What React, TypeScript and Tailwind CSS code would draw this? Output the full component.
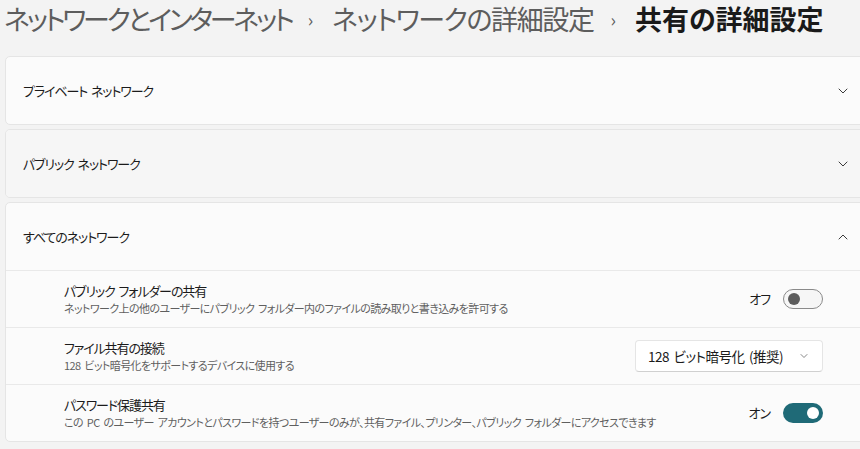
import { ChevronDown, ChevronUp } from "lucide-react";

const font = "font-['Noto_Sans_CJK_JP','Noto_Sans',sans-serif] [font-feature-settings:'palt'] [word-spacing:2px]";

function Toggle({ on }: { on: boolean }) {
  return on ? (
    <div className="flex h-[20px] w-[40px] items-center justify-end rounded-full bg-[#1f6a77] px-[4px]">
      <div className="h-[12px] w-[12px] rounded-full bg-white" />
    </div>
  ) : (
    <div className="flex h-[20px] w-[40px] items-center rounded-full border border-[#8a8a8a] bg-[#f6f6f6] px-[4px]">
      <div className="h-[12px] w-[12px] rounded-full bg-[#5c5c5c]" />
    </div>
  );
}

function Header({ label, open, hover }: { label: string; open?: boolean; hover?: boolean }) {
  return (
    <div className={`flex h-[67px] items-center justify-between pl-[17px] pr-[18px] ${hover ? "bg-[#f6f6f6]" : ""}`}>
      <span className="text-[13px] tracking-[-1.1px] text-[#1b1b1b]">{label}</span>
      {open ? (
        <ChevronUp size={16} strokeWidth={1.5} className="text-[#3b3b3b]" />
      ) : (
        <ChevronDown size={16} strokeWidth={1.5} className="text-[#3b3b3b]" />
      )}
    </div>
  );
}

function Row({ title, desc, children }: { title: string; desc: string; children: React.ReactNode }) {
  return (
    <div className="flex h-[57px] items-center justify-between border-t border-[#e9e9e9] pl-[58px] pr-[46px]">
      <div className="flex flex-col">
        <span className="text-[13px] leading-[18px] tracking-[-1.1px] text-[#1b1b1b]">{title}</span>
        <span className="text-[11px] leading-[16px] tracking-[-0.6px] text-[#5f5f5f]">{desc}</span>
      </div>
      {children}
    </div>
  );
}

export default function App() {
  return (
    <div className={`h-[449px] w-[860px] overflow-hidden bg-[#f3f3f3] ${font}`}>
      <div className="flex h-[55px] items-start pl-[4px] text-[27px] leading-[38px] whitespace-nowrap">
        <span className="tracking-[-3.2px] text-[#5d5d5d]">ネットワークとインターネット</span>
        <span className="ml-[16px] mr-[19px] text-[18px] text-[#5d5d5d]">›</span>
        <span className="tracking-[-1.4px] text-[#5d5d5d]">ネットワークの詳細設定</span>
        <span className="ml-[17px] mr-[19px] text-[18px] text-[#5d5d5d]">›</span>
        <span className="font-semibold text-[#1a1a1a]">共有の詳細設定</span>
      </div>
      <div className="ml-[5px] mr-[-10px] flex flex-col gap-[4px] pt-[1px]">
        <div className="rounded-[5px] border border-[#e5e5e5] bg-[#fbfbfb]">
          <Header label="プライベート ネットワーク" />
        </div>
        <div className="overflow-hidden rounded-[5px] border border-[#e5e5e5] bg-[#f6f6f6]">
          <Header label="パブリック ネットワーク" hover />
        </div>
        <div className="rounded-[5px] border border-[#e5e5e5] bg-[#fbfbfb]">
          <Header label="すべてのネットワーク" open />
          <Row
            title="パブリック フォルダーの共有"
            desc="ネットワーク上の他のユーザーにパブリック フォルダー内のファイルの読み取りと書き込みを許可する"
          >
            <div className="flex items-center gap-[13px]">
              <span className="text-[13px] tracking-[-1px] text-[#1b1b1b]">オフ</span>
              <Toggle on={false} />
            </div>
          </Row>
          <Row title="ファイル共有の接続" desc="128 ビット暗号化をサポートするデバイスに使用する">
            <div className="flex h-[32px] w-[188px] items-center justify-between rounded-[4px] border border-[#e5e5e5] border-b-[#d0d0d0] bg-white pl-[12px] pr-[12px]">
              <span className="text-[13.5px] tracking-[-0.5px] text-[#1b1b1b]">128 ビット暗号化 (推奨)</span>
              <ChevronDown size={12} strokeWidth={1.5} className="text-[#5f5f5f]" />
            </div>
          </Row>
          <Row
            title="パスワード保護共有"
            desc="この PC のユーザー アカウントとパスワードを持つユーザーのみが、共有ファイル、プリンター、パブリック フォルダーにアクセスできます"
          >
            <div className="flex items-center gap-[13px]">
              <span className="text-[13px] tracking-[-1px] text-[#1b1b1b]">オン</span>
              <Toggle on />
            </div>
          </Row>
        </div>
      </div>
    </div>
  );
}
